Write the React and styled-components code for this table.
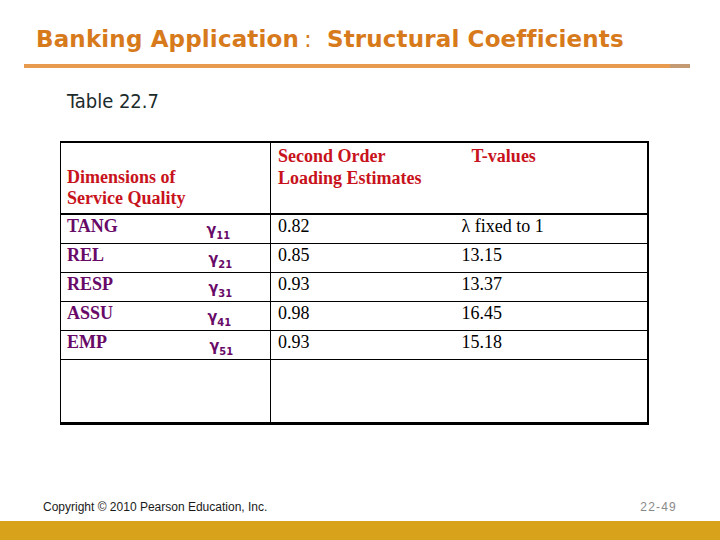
import React from "react";
import styled, { createGlobalStyle } from "styled-components";

const Global = createGlobalStyle`
  html, body { margin: 0; padding: 0; background: #fff; }
  #root { width: 720px; height: 540px; }
`;

const Page = styled.div`
  width: 720px;
  height: 540px;
  display: flex;
  flex-direction: column;
  background: #fff;
  overflow: hidden;
`;

const Title = styled.h1`
  margin: 0;
  padding: 24px 0 0 36px;
  height: 36px;
  font-family: "DejaVu Sans", sans-serif;
  font-weight: bold;
  font-size: 23px;
  line-height: 30px;
  letter-spacing: 0.15px;
  color: #d77a1c;
  white-space: nowrap;
`;

const Colon = styled.span`
  font-weight: normal;
  padding: 0 15px 0 5px;
`;

const Rule = styled.div`
  margin: 4px 0 0 24px;
  width: 666px;
  height: 4px;
  background: linear-gradient(to right, #e89a4f 0, #e89a4f 646px, #c49a72 646px, #c49a72 666px);
`;

const Caption = styled.div`
  margin: 21px 0 0 67px;
  font-family: "DejaVu Sans Condensed", "DejaVu Sans", sans-serif;
  font-size: 20px;
  line-height: 24px;
  color: #1c2b2b;
`;

const Table = styled.table`
  margin: 28px 0 0 60px;
  width: 589px;
  border-collapse: collapse;
  table-layout: fixed;
  font-family: "Liberation Serif", "Times New Roman", serif;
  font-size: 18px;
  line-height: 21.6px;
  border-left: 1px solid #000;
  border-right: 2px solid #000;
  border-top: 2px solid #000;
  border-bottom: 3px solid #000;
`;

const HeadCell = styled.th`
  text-align: left;
  font-weight: bold;
  color: #c8121c;
  vertical-align: ${(p) => (p.$bottom ? "bottom" : "top")};
  padding: ${(p) => (p.$bottom ? "0 0 3px 6px" : `3px 0 0 ${p.$indent || 7}px`)};
  height: 67px;
  border-bottom: 2px solid #000;
  border-right: ${(p) => (p.$divider ? "1px solid #000" : "none")};
`;

const Row = styled.tr`
  height: 29px;
  border-bottom: 1px solid #000;
`;

const Cell = styled.td`
  vertical-align: top;
  padding: 1px 0 0 ${(p) => p.$pad || 7}px;
  color: ${(p) => (p.$label ? "#680a68" : "#000")};
  font-weight: ${(p) => (p.$label ? "bold" : "normal")};
  border-right: ${(p) => (p.$divider ? "1px solid #000" : "none")};
  white-space: nowrap;
`;

const Gamma = styled.span`
  display: inline-block;
  margin-top: 5px;
  margin-left: ${(p) => p.$shift}px;
  font-family: "DejaVu Sans Condensed", "DejaVu Sans", sans-serif;
  font-weight: bold;
  font-size: 16px;
  line-height: 18px;
  color: #680a68;
`;

const Sub = styled.sub`
  font-size: 11px;
  vertical-align: -4px;
  line-height: 0;
`;

const EmptyRow = styled.tr`
  height: 64px;
`;

const Spacer = styled.div`
  flex: 1;
`;

const Footer = styled.div`
  display: flex;
  justify-content: space-between;
  align-items: flex-end;
  padding: 0 43px 7px 43px;
  font-family: "Liberation Sans", Arial, sans-serif;
  font-size: 12px;
  line-height: 14px;
`;

const Copyright = styled.span`
  color: #1a1a1a;
`;

const PageNo = styled.span`
  color: #8a8a8a;
  letter-spacing: 1.2px;
`;

const Bar = styled.div`
  height: 19px;
  background: #d9a21b;
`;

const rows = [
  { label: "TANG", g: "11", shift: 5, est: "0.82", t: "λ fixed to 1" },
  { label: "REL", g: "21", shift: 7, est: "0.85", t: "13.15" },
  { label: "RESP", g: "31", shift: 7, est: "0.93", t: "13.37" },
  { label: "ASSU", g: "41", shift: 6, est: "0.98", t: "16.45" },
  { label: "EMP", g: "51", shift: 8, est: "0.93", t: "15.18" },
];

export default function App() {
  return (
    <Page>
      <Global />
      <Title>
        Banking Application<Colon>:</Colon>Structural Coefficients
      </Title>
      <Rule />
      <Caption>Table 22.7</Caption>
      <Table>
        <colgroup>
          <col style={{ width: "134px" }} />
          <col style={{ width: "76px" }} />
          <col style={{ width: "185px" }} />
          <col />
        </colgroup>
        <thead>
          <tr>
            <HeadCell colSpan={2} $bottom $divider>
              Dimensions of
              <br />
              Service Quality
            </HeadCell>
            <HeadCell>
              Second Order
              <br />
              Loading Estimates
            </HeadCell>
            <HeadCell $indent={16}>T-values</HeadCell>
          </tr>
        </thead>
        <tbody>
          {rows.map((r) => (
            <Row key={r.label}>
              <Cell $label $pad={6}>{r.label}</Cell>
              <Cell $pad={0} $divider>
                <Gamma $shift={r.shift}>
                  γ<Sub>{r.g}</Sub>
                </Gamma>
              </Cell>
              <Cell>{r.est}</Cell>
              <Cell $pad={6}>{r.t}</Cell>
            </Row>
          ))}
          <EmptyRow>
            <Cell colSpan={2} $divider />
            <Cell colSpan={2} />
          </EmptyRow>
        </tbody>
      </Table>
      <Spacer />
      <Footer>
        <Copyright>Copyright © 2010 Pearson Education, Inc.</Copyright>
        <PageNo>22-49</PageNo>
      </Footer>
      <Bar />
    </Page>
  );
}
